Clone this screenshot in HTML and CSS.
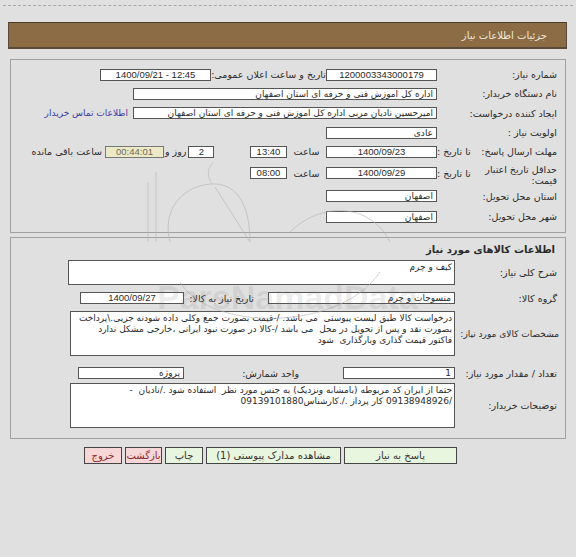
FILE: index.html
```html
<!DOCTYPE html>
<html lang="fa" dir="rtl">
<head>
<meta charset="utf-8">
<title>جزئیات اطلاعات نیاز</title>
<link rel="stylesheet" href="styles.css">
</head>
<body>
<div class="topline"></div>
<div class="header"><span>جزئیات اطلاعات نیاز</span></div>

<div class="panel p1">
  <div class="row h19">
    <div class="lbl">شماره نیاز:</div>
    <div class="box w111 c ltr">1200003343000179</div>
    <div class="txt ann">تاریخ و ساعت اعلان عمومی:</div>
    <div class="box w111 c ltr">1400/09/21 - 12:45</div>
  </div>
  <div class="row h19">
    <div class="lbl">نام دستگاه خریدار:</div>
    <div class="box w304">اداره کل اموزش فنی و حرفه ای استان اصفهان</div>
  </div>
  <div class="row h20">
    <div class="lbl">ایجاد کننده درخواست:</div>
    <div class="box w304">امیرحسین نادیان مربی اداره کل اموزش فنی و حرفه ای استان اصفهان</div>
    <a class="link" href="#">اطلاعات تماس خریدار</a>
  </div>
  <div class="row h19">
    <div class="lbl">اولویت نیاز :</div>
    <div class="box w111">عادی</div>
  </div>
  <div class="row h19">
    <div class="lbl split"><span>مهلت ارسال پاسخ:</span><span>تا تاریخ :</span></div>
    <div class="box w111 c ltr">1400/09/23</div>
    <div class="txt saat">ساعت</div>
    <div class="box w37 c ltr">13:40</div>
    <div class="dayswrap">
      <div class="box w26 c ltr">2</div>
      <div class="txt rooz">روز و</div>
    </div>
    <div class="box w59 c ltr remain">00:44:01</div>
    <div class="txt rest">ساعت باقی مانده</div>
  </div>
  <div class="row h24">
    <div class="lbl split"><span class="two">حداقل تاریخ اعتبار<br>قیمت:</span><span class="tata">تا تاریخ :</span></div>
    <div class="box w111 c ltr">1400/09/29</div>
    <div class="txt saat">ساعت</div>
    <div class="box w37 c ltr">08:00</div>
  </div>
  <div class="row h22">
    <div class="lbl">استان محل تحویل:</div>
    <div class="box w111">اصفهان</div>
  </div>
  <div class="row h19">
    <div class="lbl">شهر محل تحویل:</div>
    <div class="box w111">اصفهان</div>
  </div>
</div>

<div class="panel p2">
  <div class="title">اطلاعات کالاهای مورد نیاز</div>
  <div class="row2 sharh">
    <div class="lbl2">شرح کلی نیاز:</div>
    <div class="area tall25 w387">کیف و چرم</div>
  </div>
  <div class="row2 goroh">
    <div class="lbl2">گروه کالا:</div>
    <div class="box w187">منسوجات و چرم</div>
    <div class="txt need">تاریخ نیاز به کالا:</div>
    <div class="box w104 c ltr">1400/09/27</div>
  </div>
  <div class="row2 spec">
    <div class="lbl2 narrow">مشخصات کالای مورد نیاز:</div>
    <div class="area tall45 w385">
      <div class="ln">درخواست کالا طبق لیست پیوستی&nbsp; می باشد. /-قیمت بصورت جمع وکلی داده شودنه جزیی.\پرداخت</div>
      <div class="ln">بصورت نقد و پس از تحویل در محل&nbsp; می باشد /-کالا در صورت نبود ایرانی ،خارجی مشکل ندارد</div>
      <div class="ln">فاکتور قیمت گذاری وبارگذاری&nbsp; شود</div>
    </div>
  </div>
  <div class="row2 qty">
    <div class="lbl2">تعداد / مقدار مورد نیاز:</div>
    <div class="box w112">1</div>
    <div class="txt unit">واحد شمارش:</div>
    <div class="box w106">پروژه</div>
  </div>
  <div class="row2 desc">
    <div class="lbl2">توضیحات خریدار:</div>
    <div class="area tall45 w385">
      <div class="ln">حتما از ایران کد مربوطه (بامشابه ونزدیک) به جنس مورد نظر&nbsp; استفاده شود ./نادیان&nbsp; -</div>
      <div class="ln">/09138948926 کار پرداز ./.کارشناس09139101880</div>
    </div>
  </div>
</div>

<div class="buttons">
  <button class="btn green b1">پاسخ به نیاز</button>
  <button class="btn green b2">مشاهده مدارک پیوستی (1)</button>
  <button class="btn green b3">چاپ</button>
  <button class="btn pink b4">بازگشت</button>
  <button class="btn pink b5">خروج</button>
</div>

<div class="watermark" aria-hidden="true">
  <svg class="wm-logo" width="260" height="200" viewBox="0 0 260 200">
    <g fill="none" stroke="#b4b4b4" stroke-width="1">
      <line x1="8" y1="20" x2="8" y2="80"/>
      <line x1="16" y1="10" x2="16" y2="80"/>
      <path d="M30 80 C 22 50, 40 25, 70 22 C 95 20, 110 40, 110 80"/>
      <path d="M72 22 C 64 10, 70 0, 82 -6"/>
      <path d="M75 25 L 110 80"/>
      <path d="M150 70 C 180 40, 230 40, 250 80"/>
      <path d="M40 120 C 70 170, 200 170, 240 110"/>
    </g>
  </svg>
  <div class="wm-text">ParsNamadData</div>
</div>
</body>
</html>
```
FILE: styles.css
```css
* { box-sizing: border-box; }
html, body { margin: 0; padding: 0; }
body {
  background: #e0e0e0;
  font-family: "DejaVu Sans", "Liberation Sans", sans-serif;
  font-size: 9.5px;
  color: #2a2a2a;
  width: 576px;
  height: 557px;
  padding-top: 5px;
  position: relative;
  overflow: hidden;
}
.topline {
  border-top: 1px dashed #a8a8a8;
  margin: 0 3px;
  height: 0;
}
.header {
  margin: 16px 9px 0 8px;
  height: 27px;
  background: #8b6c44;
  border-top: 1px solid #4a3c2c;
  border-bottom: 2px solid #5a4a3a;
  border-left: 1px solid #5a4a3a;
  border-right: 1px solid #5a4a3a;
  display: flex;
  align-items: center;
  padding-right: 19px;
  color: #f1e9dc;
  font-size: 10px;
}
.panel {
  margin-left: 10px;
  margin-right: 10px;
  border: 1px solid #a0a0a0;
}
.p1 {
  margin-top: 10px;
  padding: 5px 0 6px 0;
}
.p2 {
  margin-top: 4px;
  padding: 3px 0 10px 0;
}
.row {
  display: flex;
  align-items: center;
}
.h19 { height: 19px; }
.h20 { height: 20px; }
.h22 { height: 22px; }
.h24 { height: 24px; }
.lbl {
  width: 128px;
  flex: none;
  padding-right: 8px;
  text-align: right;
  white-space: nowrap;
}
.lbl.split {
  display: flex;
  justify-content: space-between;
  align-items: center;
  padding-left: 0;
}
.lbl .two { line-height: 11px; margin-top: 4px; }
.box {
  height: 12px;
  background: #fff;
  border: 1px solid #555;
  flex: none;
  padding: 0 3px;
  line-height: 10px;
  text-align: right;
  white-space: nowrap;
  overflow: hidden;
  font-size: 9px;
}
.box.c {
  text-align: center;
  font-family: "Liberation Sans", "DejaVu Sans", sans-serif;
  font-size: 9.5px;
}
.ltr { direction: ltr; }
.w111 { width: 111px; }
.w304 { width: 304px; }
.w37 { width: 37px; }
.w26 { width: 26px; }
.w59 { width: 59px; }
.w187 { width: 187px; }
.w104 { width: 104px; }
.w112 { width: 112px; }
.w106 { width: 106px; }
.txt { flex: none; white-space: nowrap; }
.ann {
  width: 115px;
  text-align: center;
}
.link {
  margin-right: 5px;
  color: #3b3ba6;
  text-decoration: none;
  white-space: nowrap;
  font-size: 9px;
}
.saat { width: 39px; text-align: center; }
.dayswrap {
  width: 85px;
  flex: none;
  display: flex;
  justify-content: flex-end;
  align-items: center;
  gap: 2px;
}
.remain {
  margin-right: 1px;
  background: #ece9c6;
  color: #6f6a55;
  border-color: #777;
}
.rest { margin-right: 3px; }

.title {
  height: 17px;
  line-height: 17px;
  padding-right: 10px;
  font-weight: bold;
  font-size: 10px;
  margin-bottom: 2px;
}
.row2 {
  display: flex;
  align-items: center;
}
.lbl2 {
  width: 110px;
  flex: none;
  padding-right: 8px;
  text-align: right;
  white-space: nowrap;
}
.lbl2.narrow { padding-right: 6px; font-size: 9px; letter-spacing: -0.2px; }
.sharh { height: 25px; }
.goroh { height: 12px; margin-top: 7px; }
.spec { height: 45px; margin-top: 7px; }
.qty { height: 12px; margin-top: 11px; }
.desc { height: 45px; margin-top: 4px; }
.area {
  flex: none;
  background: #fff;
  border: 1px solid #555;
  padding: 1px 2px;
  text-align: right;
  overflow: hidden;
  line-height: 11px;
  font-size: 9px;
}
.tall25 { height: 25px; }
.tall45 { height: 45px; }
.w387 { width: 387px; }
.w385 { width: 385px; }
.ln { white-space: nowrap; }
.need {
  width: 84px;
  padding-right: 14px;
  text-align: right;
}
.unit {
  width: 159px;
  padding-right: 44px;
  text-align: right;
}

.buttons {
  display: flex;
  gap: 3px;
  margin-top: 8px;
  padding-right: 119px;
  height: 17px;
}
.btn {
  height: 17px;
  border: 1px solid #444;
  font-family: "DejaVu Sans", sans-serif;
  font-size: 10px;
  padding: 0;
  flex: none;
  color: #333;
}
.green { background: #e8f6df; }
.pink { background: #f6d6d6; color: #8a2a2a; }
.b1 { width: 113px; }
.b2 { width: 135px; }
.b3 { width: 38px; }
.b4 { width: 37px; }
.b5 { width: 38px; }

.watermark {
  position: absolute;
  left: 0;
  top: 0;
  width: 576px;
  height: 557px;
  pointer-events: none;
}
.wm-logo {
  position: absolute;
  left: 140px;
  top: 162px;
  opacity: 0.6;
}
.wm-text {
  position: absolute;
  left: 157px;
  top: 278px;
  font-family: "Liberation Sans", sans-serif;
  font-weight: bold;
  font-size: 34px;
  color: rgba(110, 110, 110, 0.13);
  direction: ltr;
}
```
